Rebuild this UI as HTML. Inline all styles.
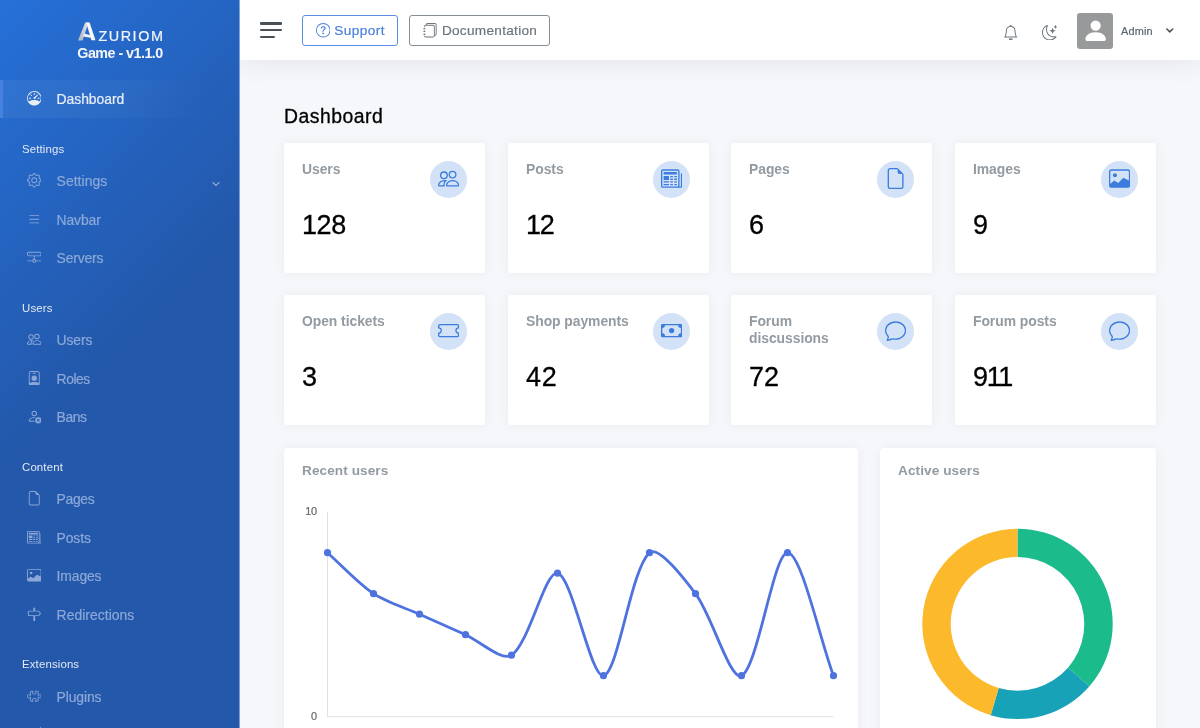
<!DOCTYPE html>
<html lang="en">
<head>
<meta charset="utf-8">
<title>Dashboard | Azuriom Admin</title>
<style>
*{box-sizing:border-box;margin:0;padding:0}
html,body{width:1200px;height:728px;overflow:hidden}
body{font-family:"Liberation Sans",sans-serif;background:#f5f7fb;color:#495057;font-size:13px;position:relative}
ul{list-style:none}
svg{display:block}

/* ---------- sidebar ---------- */
#sidebar{position:absolute;left:0;top:0;width:240px;height:728px;overflow:hidden;
  background:linear-gradient(135deg,#2670d8 0,#2358aa 335px);color:#e9ecef;box-shadow:inset -1px 0 0 rgba(255,255,255,.42)}
.brand{height:79.6px;position:relative}
.brand .logo{position:absolute;left:77px;top:21px}
.brand .name{position:absolute;left:98.4px;top:27.6px;font-size:14.4px;line-height:16px;letter-spacing:1.55px;color:#f2f5fa;font-weight:400;white-space:nowrap}
.brand .ver{position:absolute;left:0;width:240px;text-align:center;top:44.9px;font-size:14.3px;line-height:16px;font-weight:700;color:#f4f6fa;letter-spacing:-.52px;white-space:nowrap}
.side-nav li.hd{height:43.7px;padding:22.6px 22px 0;font-size:11.4px;line-height:16px;color:#e4e9f2;letter-spacing:.15px;white-space:nowrap}
.side-nav li.it{height:38.45px;display:flex;align-items:center;padding-left:26.8px;position:relative;color:#8ca8d8;font-size:13.9px;letter-spacing:-.12px;white-space:nowrap}
.side-nav li.it svg{width:14.5px;height:14.5px;fill:currentColor;margin-right:15.3px;flex:none;position:relative;top:-.7px}
.side-nav li.it span{position:relative;top:-.15px}
.side-nav li.it.active{color:#e9eef7;background:linear-gradient(90deg,rgba(255,255,255,.055),rgba(255,255,255,.035) 50%,rgba(255,255,255,0) 90%);border-left:3px solid #4681dc;padding-left:23.8px;letter-spacing:-.04px}
.side-nav li.it .chev{position:absolute;right:20.5px;top:18.2px;width:8px;height:8px;margin:0}

/* ---------- main ---------- */
#main{position:absolute;left:240px;top:0;width:960px;height:728px;overflow:hidden}
#topbar{position:absolute;left:0;top:0;width:960px;height:60px;background:#fff;box-shadow:0 0 29px 0 rgba(33,37,41,.1);z-index:5}

/* topbar */
.hamb{position:absolute;left:20px;top:21.6px;width:22px;height:18px}
.hamb i{position:absolute;left:0;height:2.7px;background:#495057;border-radius:1px;width:21.8px}
.hamb i:nth-child(1){top:0}.hamb i:nth-child(2){top:6.8px}.hamb i:nth-child(3){top:13.6px;width:14.6px}
.btn{position:absolute;top:14.8px;height:30.6px;border:1px solid;border-radius:3px;display:flex;align-items:center;font-size:13.6px;white-space:nowrap;background:#fff}
.btn svg{width:14.5px;height:14.5px;fill:currentColor;flex:none}
.btn.sup{left:62.3px;width:95.6px;color:#4a80dc;border-color:#5b8de2;padding-left:12.6px;letter-spacing:.42px}
.btn.sup svg{margin-right:4.2px}
.btn.doc{left:169.3px;width:140.6px;color:#6c757d;border-color:#858d95;padding-left:12.6px;letter-spacing:.3px}
.btn.doc svg{margin-right:4.8px}
.tico{position:absolute;fill:#6c757d}
.avatar{position:absolute;left:836.6px;top:13.2px;width:36.4px;height:36.4px;border-radius:3px;background:#98999b;overflow:hidden}
.avatar svg{position:absolute;left:4.7px;top:4.4px;width:27.3px;height:27.3px;fill:#fff}
.uname{position:absolute;left:880.6px;top:24.2px;font-size:10.9px;line-height:14px;color:#5d666e;letter-spacing:.2px;white-space:nowrap}

/* content */
h1{position:absolute;left:44.4px;top:105.2px;font-size:19.4px;line-height:23px;font-weight:400;color:#000;letter-spacing:.48px;white-space:nowrap}
.card{position:absolute;background:#fff;border-radius:3.5px;box-shadow:0 0 13px 0 rgba(33,37,41,.05)}
.stat{width:201.1px;height:130.3px}
.stat .t{position:absolute;left:18.2px;top:18.2px;width:120px;font-size:13.9px;line-height:16.5px;font-weight:700;color:#939ba2;letter-spacing:-.05px}
.stat .n{position:absolute;left:18.4px;top:67.2px;font-size:27px;line-height:30px;color:#000;letter-spacing:-1.35px;white-space:nowrap}
.stat .ic{position:absolute;right:18.4px;top:18px;width:36.8px;height:36.8px;border-radius:50%;background:#d3e2f7}
.stat .ic svg{position:absolute;left:7.8px;top:7px;width:21.2px;height:21.2px;fill:#3b7ddd}
.c1{left:44px}.c2{left:267.55px}.c3{left:491.1px}.c4{left:714.6px}
.r1{top:142.9px}.r2{top:295.2px}
.chart-t{position:absolute;left:18.2px;top:15.4px;font-size:13.6px;line-height:16.5px;font-weight:700;color:#939ba2;letter-spacing:.08px;white-space:nowrap}
.tick{position:absolute;left:0;width:32.8px;text-align:right;font-size:10.9px;line-height:13px;color:#666;letter-spacing:-.3px}
/* greyscale text AA: promote text containers to non-opaque layers */
.side-nav,.brand,#topbar>*,h1,.card>*{will-change:transform}
.stat .n,h1{-webkit-text-stroke:.3px #000}
.side-nav li.it span,.btn span,.uname,.tick,.brand .name{-webkit-text-stroke:.2px currentColor}
</style>
</head>
<body>

<nav id="sidebar">
  <div class="brand">
    <svg class="logo" width="20" height="21" viewBox="0 0 20 21">
      <defs><linearGradient id="lg" x1="0" y1="1" x2="1" y2="0"><stop offset="0" stop-color="#aeb4bd"/><stop offset="1" stop-color="#e2e5e9"/></linearGradient></defs>
      <polygon points="1,19.5 8.2,1.6 11.6,1.6 5.5,19.5" fill="url(#lg)"/>
      <polygon points="9.2,1.6 12.6,1.6 18.5,19.3 14.4,19.3" fill="#f7f8fa"/>
      <polygon points="7.2,12.6 14.2,14.6 14.8,17 6.2,15.4" fill="#f1f3f6"/>
    </svg>
    <div class="name">ZURIOM</div>
    <div class="ver">Game - v1.1.0</div>
  </div>
  <ul class="side-nav">
    <li class="it active"><svg viewBox="0 0 16 16"><path d="M8 2a.5.5 0 0 1 .5.5V4a.5.5 0 0 1-1 0V2.500A.5.5 0 0 1 8 2zM3.732 3.732a.5.5 0 0 1 .707 0l.915.914a.5.5 0 1 1-.708.708l-.914-.915a.5.5 0 0 1 0-.707zM2 8a.5.5 0 0 1 .5-.5h1.586a.5.5 0 0 1 0 1H2.500A.5.5 0 0 1 2 8zm9.500 0a.5.5 0 0 1 .5-.5h1.500a.5.5 0 0 1 0 1H12a.5.5 0 0 1-.5-.5zm.754-4.246a.389.389 0 0 0-.527-.020L7.547 7.310A.910.910 0 1 0 8.850 8.569l3.434-4.297a.389.389 0 0 0-.029-.518z"/><path fill-rule="evenodd" d="M6.664 15.889A8 8 0 1 1 9.336.110a8 8 0 0 1-2.672 15.780zm-4.665-4.283A11.945 11.945 0 0 1 8 10c2.186 0 4.236.585 6.001 1.606a7 7 0 1 0-12.002 0z"/></svg><span>Dashboard</span></li>
    <li class="hd">Settings</li>
    <li class="it"><svg viewBox="0 0 16 16"><path d="M8 4.754a3.246 3.246 0 1 0 0 6.492 3.246 3.246 0 0 0 0-6.492zM5.754 8a2.246 2.246 0 1 1 4.492 0 2.246 2.246 0 0 1-4.492 0z"/><path d="M9.796 1.343c-.527-1.790-3.065-1.790-3.592 0l-.094.319a.873.873 0 0 1-1.255.520l-.292-.160c-1.640-.892-3.433.902-2.540 2.541l.159.292a.873.873 0 0 1-.520 1.255l-.319.094c-1.790.527-1.790 3.065 0 3.592l.319.094a.873.873 0 0 1 .520 1.255l-.160.292c-.892 1.640.901 3.434 2.541 2.540l.292-.159a.873.873 0 0 1 1.255.520l.094.319c.527 1.790 3.065 1.790 3.592 0l.094-.319a.873.873 0 0 1 1.255-.520l.292.160c1.640.893 3.434-.902 2.540-2.541l-.159-.292a.873.873 0 0 1 .520-1.255l.319-.094c1.790-.527 1.790-3.065 0-3.592l-.319-.094a.873.873 0 0 1-.520-1.255l.160-.292c.893-1.640-.902-3.433-2.541-2.540l-.292.159a.873.873 0 0 1-1.255-.520l-.094-.319zm-2.633.283c.246-.835 1.428-.835 1.674 0l.094.319a1.873 1.873 0 0 0 2.693 1.115l.291-.160c.764-.415 1.600.420 1.184 1.185l-.159.292a1.873 1.873 0 0 0 1.116 2.692l.318.094c.835.246.835 1.428 0 1.674l-.319.094a1.873 1.873 0 0 0-1.115 2.693l.160.291c.415.764-.420 1.600-1.185 1.184l-.291-.159a1.873 1.873 0 0 0-2.693 1.116l-.094.318c-.246.835-1.428.835-1.674 0l-.094-.319a1.873 1.873 0 0 0-2.692-1.115l-.292.160c-.764.415-1.600-.420-1.184-1.185l.159-.291A1.873 1.873 0 0 0 1.945 8.930l-.319-.094c-.835-.246-.835-1.428 0-1.674l.319-.094A1.873 1.873 0 0 0 3.060 4.377l-.160-.292c-.415-.764.420-1.600 1.185-1.184l.292.159a1.873 1.873 0 0 0 2.692-1.115l.094-.319z"/></svg><span style="letter-spacing:.06px">Settings</span><svg class="chev" viewBox="0 0 16 16"><path d="M2 5l6 6 6-6" fill="none" stroke="currentColor" stroke-width="2.2" stroke-linecap="round" stroke-linejoin="round"/></svg></li>
    <li class="it"><svg viewBox="0 0 16 16"><path fill-rule="evenodd" d="M2.500 12a.5.5 0 0 1 .5-.5h10a.5.5 0 0 1 0 1H3a.5.5 0 0 1-.5-.5zm0-4a.5.5 0 0 1 .5-.5h10a.5.5 0 0 1 0 1H3a.5.5 0 0 1-.5-.5zm0-4a.5.5 0 0 1 .5-.5h10a.5.5 0 0 1 0 1H3a.5.5 0 0 1-.5-.5z"/></svg><span>Navbar</span></li>
    <li class="it"><svg viewBox="0 0 16 16"><path d="M4.500 5a.5.5 0 1 0 0-1 .5.5 0 0 0 0 1zM3 4.500a.5.5 0 1 1-1 0 .5.5 0 0 1 1 0z"/><path d="M0 4a2 2 0 0 1 2-2h12a2 2 0 0 1 2 2v1a2 2 0 0 1-2 2H8.500v3a1.500 1.500 0 0 1 1.500 1.500h5.500a.5.5 0 0 1 0 1H10A1.500 1.500 0 0 1 8.500 14h-1A1.500 1.500 0 0 1 6 12.500H.500a.5.5 0 0 1 0-1H6A1.500 1.500 0 0 1 7.500 10V7H2a2 2 0 0 1-2-2V4zm1 0v1a1 1 0 0 0 1 1h12a1 1 0 0 0 1-1V4a1 1 0 0 0-1-1H2a1 1 0 0 0-1 1zm6 7.500v1a.5.5 0 0 0 .5.5h1a.5.5 0 0 0 .5-.5v-1a.5.5 0 0 0-.5-.5h-1a.5.5 0 0 0-.5.5z"/></svg><span style="letter-spacing:-.17px">Servers</span></li>
    <li class="hd">Users</li>
    <li class="it"><svg viewBox="0 0 16 16"><path d="M15 14s1 0 1-1-1-4-5-4-5 3-5 4 1 1 1 1h8zm-7.978-1A.261.261 0 0 1 7 12.996c.001-.264.167-1.030.760-1.720C8.312 10.629 9.282 10 11 10c1.717 0 2.687.630 3.240 1.276.593.690.758 1.457.760 1.720l-.008.002a.274.274 0 0 1-.014.002H7.022zM11 7a2 2 0 1 0 0-4 2 2 0 0 0 0 4zm3-2a3 3 0 1 1-6 0 3 3 0 0 1 6 0zM6.936 9.280a5.880 5.880 0 0 0-1.230-.247A7.350 7.350 0 0 0 5 9c-4 0-5 3-5 4 0 .667.333 1 1 1h4.216A2.238 2.238 0 0 1 5 13c0-1.010.377-2.042 1.090-2.904.243-.294.526-.569.846-.816zM4.920 10A5.493 5.493 0 0 0 4 13H1c0-.260.164-1.030.760-1.724.545-.636 1.492-1.256 3.160-1.275zM1.500 5.500a3 3 0 1 1 6 0 3 3 0 0 1-6 0zm3-2a2 2 0 1 0 0 4 2 2 0 0 0 0-4z"/></svg><span>Users</span></li>
    <li class="it"><svg viewBox="0 0 16 16"><path d="M6.500 2a.5.5 0 0 0 0 1h3a.5.5 0 0 0 0-1h-3zM11 8a3 3 0 1 1-6 0 3 3 0 0 1 6 0z"/><path d="M4.500 0A2.500 2.500 0 0 0 2 2.500V14a2 2 0 0 0 2 2h8a2 2 0 0 0 2-2V2.500A2.500 2.500 0 0 0 11.500 0h-7zM3 2.500A1.500 1.500 0 0 1 4.500 1h7A1.500 1.500 0 0 1 13 2.500v10.795a4.200 4.200 0 0 0-.776-.492C11.392 12.387 10.063 12 8 12s-3.392.387-4.224.803a4.200 4.200 0 0 0-.776.492V2.500z"/></svg><span style="letter-spacing:-.47px">Roles</span></li>
    <li class="it"><svg viewBox="0 0 16 16"><path d="M11 5a3 3 0 1 1-6 0 3 3 0 0 1 6 0zM8 7a2 2 0 1 0 0-4 2 2 0 0 0 0 4zm.256 7a4.474 4.474 0 0 1-.229-1.004H3c.001-.246.154-.986.832-1.664C4.484 10.680 5.711 10 8 10c.260 0 .507.009.740.025.226-.341.496-.650.804-.918C9.077 9.038 8.564 9 8 9c-5 0-6 3-6 4s1 1 1 1h5.256z"/><path d="M12.500 16a3.500 3.500 0 1 0 0-7 3.500 3.500 0 0 0 0 7zm-.646-4.854.646.647.646-.647a.5.5 0 0 1 .708.708l-.647.646.647.646a.5.5 0 0 1-.708.708l-.646-.647-.646.647a.5.5 0 0 1-.708-.708l.647-.646-.647-.646a.5.5 0 0 1 .708-.708z"/></svg><span style="letter-spacing:-.43px">Bans</span></li>
    <li class="hd">Content</li>
    <li class="it"><svg viewBox="0 0 16 16"><path d="M14 4.500V14a2 2 0 0 1-2 2H4a2 2 0 0 1-2-2V2a2 2 0 0 1 2-2h5.500L14 4.500zm-3 0A1.500 1.500 0 0 1 9.500 3V1H4a1 1 0 0 0-1 1v12a1 1 0 0 0 1 1h8a1 1 0 0 0 1-1V4.500h-2z"/></svg><span style="letter-spacing:-.32px">Pages</span></li>
    <li class="it"><svg viewBox="0 0 16 16"><path d="M0 2.500A1.500 1.500 0 0 1 1.500 1h11A1.500 1.500 0 0 1 14 2.500v10.528c0 .3-.05.654-.238.972h.738a.5.5 0 0 0 .5-.5v-9a.5.5 0 0 1 1 0v9a1.500 1.500 0 0 1-1.500 1.500H1.497A1.497 1.497 0 0 1 0 13.500v-11zM12 14c.37 0 .654-.211.853-.441.092-.106.147-.279.147-.531V2.500a.5.5 0 0 0-.5-.5h-11a.5.5 0 0 0-.5.5v11c0 .278.223.5.497.5H12z"/><path d="M2 3h10v2H2V3zm0 3h4v3H2V6zm0 4h4v1H2v-1zm0 2h4v1H2v-1zm5-6h2v1H7V6zm3 0h2v1h-2V6zM7 8h2v1H7V8zm3 0h2v1h-2V8zm-3 2h2v1H7v-1zm3 0h2v1h-2v-1zm-3 2h2v1H7v-1zm3 0h2v1h-2v-1z"/></svg><span>Posts</span></li>
    <li class="it"><svg viewBox="0 0 16 16"><path d="M6.002 5.500a1.500 1.500 0 1 1-3 0 1.500 1.500 0 0 1 3 0z"/><path d="M2.002 1a2 2 0 0 0-2 2v10a2 2 0 0 0 2 2h12a2 2 0 0 0 2-2V3a2 2 0 0 0-2-2h-12zm12 1a1 1 0 0 1 1 1v6.500l-3.777-1.947a.5.5 0 0 0-.577.093l-3.710 3.710-2.660-1.772a.5.5 0 0 0-.630.062L1.002 12V3a1 1 0 0 1 1-1h12z"/></svg><span>Images</span></li>
    <li class="it"><svg viewBox="0 0 16 16"><path d="M7 1.414V4H2a1 1 0 0 0-1 1v4a1 1 0 0 0 1 1h5v6h2v-6h3.532a1 1 0 0 0 .768-.360l1.933-2.320a.5.5 0 0 0 0-.640L13.300 4.360a1 1 0 0 0-.768-.360H9V1.414a1 1 0 0 0-2 0zM12.532 5l1.666 2-1.666 2H2V5h10.532z"/></svg><span style="letter-spacing:.04px">Redirections</span></li>
    <li class="hd">Extensions</li>
    <li class="it"><svg viewBox="0 0 16 16"><path fill="none" stroke="currentColor" stroke-width="1" stroke-linejoin="round" d="M3.600 3.200a.8.8 0 0 1 .8-.7H6.800c.2.900-.9 1.200-.9 2 0 .800 1 1.100 2.100 1.100s2.100-.300 2.100-1.100c0-.800-1.100-1.100-.9-2h2.400a.8.800 0 0 1 .8.700L12.100 7h.8c.9 0 .9-1 1.600-1 .700 0 1 .9 1 2s-.3 2-1 2c-.7 0-.7-1-1.600-1h-.8l.3 3.800a.8.800 0 0 1-.8.700H9.200c-.2-.900.900-1.200.9-2 0-.800-1-1.100-2.100-1.100s-2.100.300-2.100 1.100c0 .800 1.100 1.100.9 2H4.400a.8.800 0 0 1-.8-.7L3.900 9h-.8c-.9 0-.9 1-1.600 1-.7 0-1-.9-1-2s.3-2 1-2c.7 0 .7 1 1.600 1h.8z"/></svg><span>Plugins</span></li>
    <li class="it"><svg viewBox="0 0 16 16"><path d="M15.825.120a.5.5 0 0 1 .132.584c-1.530 3.430-4.743 8.170-7.095 10.640a6.100 6.100 0 0 1-2.373 1.534c-.018.227-.06.538-.160.868-.201.659-.667 1.479-1.708 1.740a8.100 8.100 0 0 1-3.078.132 4 4 0 0 1-.562-.135 1.400 1.400 0 0 1-.466-.247.700.7 0 0 1-.204-.288.620.620 0 0 1 .004-.443c.095-.245.316-.380.461-.452.394-.197.625-.453.867-.826.095-.144.184-.297.287-.472l.117-.198c.151-.255.326-.540.546-.848.528-.739 1.201-.925 1.746-.896q.190.012.348.048c.062-.172.142-.380.238-.608.261-.619.658-1.419 1.187-2.069 2.176-2.670 6.180-6.206 9.117-8.104a.5.5 0 0 1 .596.040z"/></svg><span>Themes</span></li>
  </ul>
</nav>

<div id="main">
  <div id="topbar">
    <div class="hamb"><i></i><i></i><i></i></div>
    <div class="btn sup"><svg viewBox="0 0 16 16"><path d="M8 15A7 7 0 1 1 8 1a7 7 0 0 1 0 14zm0 1A8 8 0 1 0 8 0a8 8 0 0 0 0 16z"/><path d="M5.255 5.786a.237.237 0 0 0 .241.247h.825c.138 0 .248-.113.266-.250.090-.656.540-1.134 1.342-1.134.686 0 1.314.343 1.314 1.168 0 .635-.374.927-.965 1.371-.673.489-1.206 1.060-1.168 1.987l.003.217a.250.250 0 0 0 .250.246h.811a.250.250 0 0 0 .250-.250v-.105c0-.718.273-.927 1.010-1.486.609-.463 1.244-.977 1.244-2.056 0-1.511-1.276-2.241-2.673-2.241-1.267 0-2.655.590-2.750 2.286zm1.557 5.763c0 .533.425.927 1.010.927.609 0 1.028-.394 1.028-.927 0-.552-.420-.940-1.029-.940-.584 0-1.009.388-1.009.940z"/></svg><span>Support</span></div>
    <div class="btn doc"><svg viewBox="0 0 16 16"><path d="M5 0h8a2 2 0 0 1 2 2v10a2 2 0 0 1-2 2 2 2 0 0 1-2 2H3a2 2 0 0 1-2-2h1a1 1 0 0 0 1 1h8a1 1 0 0 0 1-1V4a1 1 0 0 0-1-1H3a1 1 0 0 0-1 1H1a2 2 0 0 1 2-2h8a2 2 0 0 1 2 2v9a1 1 0 0 0 1-1V2a1 1 0 0 0-1-1H5a1 1 0 0 0-1 1H3a2 2 0 0 1 2-2z"/><path d="M1 6v-.5a.5.5 0 0 1 1 0V6h.5a.5.5 0 0 1 0 1h-2a.5.5 0 0 1 0-1H1zm0 3v-.5a.5.5 0 0 1 1 0V9h.5a.5.5 0 0 1 0 1h-2a.5.5 0 0 1 0-1H1zm0 2.500v.5H.500a.5.5 0 0 0 0 1h2a.5.5 0 0 0 0-1H2v-.5a.5.5 0 0 0-1 0z"/></svg><span>Documentation</span></div>
    <svg class="tico" style="left:763.4px;top:24.6px;width:15.4px;height:15.4px" viewBox="0 0 16 16"><path d="M8 16a2 2 0 0 0 2-2H6a2 2 0 0 0 2 2zM8 1.918l-.797.161A4.002 4.002 0 0 0 4 6c0 .628-.134 2.197-.459 3.742-.160.767-.376 1.566-.663 2.258h10.244c-.287-.692-.502-1.490-.663-2.258C12.134 8.197 12 6.628 12 6a4.002 4.002 0 0 0-3.203-3.920L8 1.917zM14.220 12c.223.447.481.801.780 1H1c.299-.199.557-.553.780-1C2.680 10.200 3 6.880 3 6c0-2.420 1.720-4.440 4.005-4.901a1 1 0 1 1 1.990 0A5.002 5.002 0 0 1 13 6c0 .880.320 4.200 1.220 6z"/></svg>
    <svg class="tico" style="left:802px;top:24.7px;width:15.4px;height:15.4px" viewBox="0 0 16 16"><path d="M6 .278a.768.768 0 0 1 .080.858 7.208 7.208 0 0 0-.878 3.460c0 4.021 3.278 7.277 7.318 7.277.527 0 1.040-.055 1.533-.160a.787.787 0 0 1 .810.316.733.733 0 0 1-.031.893A8.349 8.349 0 0 1 8.344 16C3.734 16 0 12.286 0 7.710 0 4.266 2.114 1.312 5.124.060A.752.752 0 0 1 6 .278zM4.858 1.311A7.269 7.269 0 0 0 1.025 7.710c0 4.020 3.279 7.276 7.319 7.276a7.316 7.316 0 0 0 5.205-2.162c-.337.042-.680.063-1.029.063-4.610 0-8.343-3.714-8.343-8.290 0-1.167.242-2.278.681-3.286z"/><path d="M10.794 3.148a.217.217 0 0 1 .412 0l.387 1.162c.173.518.579.924 1.097 1.097l1.162.387a.217.217 0 0 1 0 .412l-1.162.387a1.734 1.734 0 0 0-1.097 1.097l-.387 1.162a.217.217 0 0 1-.412 0l-.387-1.162A1.734 1.734 0 0 0 9.310 6.593l-1.162-.387a.217.217 0 0 1 0-.412l1.162-.387a1.734 1.734 0 0 0 1.097-1.097l.387-1.162zM13.863.099a.145.145 0 0 1 .274 0l.258.774c.115.346.386.617.732.732l.774.258a.145.145 0 0 1 0 .274l-.774.258a1.156 1.156 0 0 0-.732.732l-.258.774a.145.145 0 0 1-.274 0l-.258-.774a1.156 1.156 0 0 0-.732-.732l-.774-.258a.145.145 0 0 1 0-.274l.774-.258c.346-.115.617-.386.732-.732L13.863.100z"/></svg>
    <div class="avatar"><svg viewBox="0 0 16 16"><path d="M3 14s-1 0-1-1 1-4 6-4 6 3 6 4-1 1-1 1H3zm5-6a3 3 0 1 0 0-6 3 3 0 0 0 0 6z"/></svg></div>
    <div class="uname">Admin</div>
    <svg class="tico" style="left:925.6px;top:27.6px;width:7.6px;height:5.4px" viewBox="0 0 14 10"><path d="M1.600 1.800 7 7.200l5.400-5.400" fill="none" stroke="#495057" style="stroke:#495057" stroke-width="2.8" stroke-linecap="round" stroke-linejoin="round"/></svg>
</div>
    <h1>Dashboard</h1>
  <div class="card stat r1 c1"><div class="t">Users</div><div class="n" style="letter-spacing:-.4px">128</div><div class="ic"><svg viewBox="0 0 16 16"><path d="M15 14s1 0 1-1-1-4-5-4-5 3-5 4 1 1 1 1h8zm-7.978-1A.261.261 0 0 1 7 12.996c.001-.264.167-1.030.760-1.720C8.312 10.629 9.282 10 11 10c1.717 0 2.687.630 3.240 1.276.593.690.758 1.457.760 1.720l-.008.002a.274.274 0 0 1-.014.002H7.022zM11 7a2 2 0 1 0 0-4 2 2 0 0 0 0 4zm3-2a3 3 0 1 1-6 0 3 3 0 0 1 6 0zM6.936 9.280a5.880 5.880 0 0 0-1.230-.247A7.350 7.350 0 0 0 5 9c-4 0-5 3-5 4 0 .667.333 1 1 1h4.216A2.238 2.238 0 0 1 5 13c0-1.010.377-2.042 1.090-2.904.243-.294.526-.569.846-.816zM4.920 10A5.493 5.493 0 0 0 4 13H1c0-.260.164-1.030.760-1.724.545-.636 1.492-1.256 3.160-1.275zM1.500 5.500a3 3 0 1 1 6 0 3 3 0 0 1-6 0zm3-2a2 2 0 1 0 0 4 2 2 0 0 0 0-4z"/></svg></div></div>
  <div class="card stat r1 c2"><div class="t">Posts</div><div class="n">12</div><div class="ic"><svg viewBox="0 0 16 16"><path d="M0 2.500A1.500 1.500 0 0 1 1.500 1h11A1.500 1.500 0 0 1 14 2.500v10.528c0 .3-.05.654-.238.972h.738a.5.5 0 0 0 .5-.5v-9a.5.5 0 0 1 1 0v9a1.500 1.500 0 0 1-1.500 1.500H1.497A1.497 1.497 0 0 1 0 13.500v-11zM12 14c.37 0 .654-.211.853-.441.092-.106.147-.279.147-.531V2.500a.5.5 0 0 0-.5-.5h-11a.5.5 0 0 0-.5.5v11c0 .278.223.5.497.5H12z"/><path d="M2 3h10v2H2V3zm0 3h4v3H2V6zm0 4h4v1H2v-1zm0 2h4v1H2v-1zm5-6h2v1H7V6zm3 0h2v1h-2V6zM7 8h2v1H7V8zm3 0h2v1h-2V8zm-3 2h2v1H7v-1zm3 0h2v1h-2v-1zm-3 2h2v1H7v-1zm3 0h2v1h-2v-1z"/></svg></div></div>
  <div class="card stat r1 c3"><div class="t">Pages</div><div class="n">6</div><div class="ic"><svg viewBox="0 0 16 16"><path d="M14 4.500V14a2 2 0 0 1-2 2H4a2 2 0 0 1-2-2V2a2 2 0 0 1 2-2h5.500L14 4.500zm-3 0A1.500 1.500 0 0 1 9.500 3V1H4a1 1 0 0 0-1 1v12a1 1 0 0 0 1 1h8a1 1 0 0 0 1-1V4.500h-2z"/></svg></div></div>
  <div class="card stat r1 c4"><div class="t">Images</div><div class="n">9</div><div class="ic"><svg viewBox="0 0 16 16"><path d="M6.002 5.500a1.500 1.500 0 1 1-3 0 1.500 1.500 0 0 1 3 0z"/><path d="M2.002 1a2 2 0 0 0-2 2v10a2 2 0 0 0 2 2h12a2 2 0 0 0 2-2V3a2 2 0 0 0-2-2h-12zm12 1a1 1 0 0 1 1 1v6.500l-3.777-1.947a.5.5 0 0 0-.577.093l-3.710 3.710-2.660-1.772a.5.5 0 0 0-.630.062L1.002 12V3a1 1 0 0 1 1-1h12z"/></svg></div></div>
  <div class="card stat r2 c1"><div class="t">Open tickets</div><div class="n">3</div><div class="ic"><svg viewBox="0 0 16 16"><path d="M0 4.500A1.500 1.500 0 0 1 1.500 3h13A1.500 1.500 0 0 1 16 4.500V6a.5.5 0 0 1-.5.5 1.500 1.500 0 0 0 0 3 .5.5 0 0 1 .5.5v1.500a1.500 1.500 0 0 1-1.500 1.500h-13A1.500 1.500 0 0 1 0 11.500V10a.5.5 0 0 1 .5-.5 1.500 1.500 0 1 0 0-3A.5.5 0 0 1 0 6V4.500zM1.500 4a.5.5 0 0 0-.5.5v1.050a2.500 2.500 0 0 1 0 4.900v1.050a.5.5 0 0 0 .5.5h13a.5.5 0 0 0 .5-.5v-1.050a2.500 2.500 0 0 1 0-4.900V4.500a.5.5 0 0 0-.5-.5h-13z"/></svg></div></div>
  <div class="card stat r2 c2"><div class="t">Shop payments</div><div class="n" style="letter-spacing:.8px">42</div><div class="ic"><svg viewBox="0 0 16 16"><path d="M8 10a2 2 0 1 0 0-4 2 2 0 0 0 0 4z"/><path d="M0 4a1 1 0 0 1 1-1h14a1 1 0 0 1 1 1v8a1 1 0 0 1-1 1H1a1 1 0 0 1-1-1V4zm3 0a2 2 0 0 1-2 2v4a2 2 0 0 1 2 2h10a2 2 0 0 1 2-2V6a2 2 0 0 1-2-2H3z"/></svg></div></div>
  <div class="card stat r2 c3"><div class="t">Forum<br>discussions</div><div class="n" style="letter-spacing:0">72</div><div class="ic"><svg viewBox="0 0 16 16"><path d="M2.678 11.894a1 1 0 0 1 .287.801 10.970 10.970 0 0 1-.398 2c1.395-.323 2.247-.697 2.634-.893a1 1 0 0 1 .710-.074A8.060 8.060 0 0 0 8 14c3.996 0 7-2.807 7-6 0-3.192-3.004-6-7-6S1 4.808 1 8c0 1.468.617 2.830 1.678 3.894zm-.493 3.905a21.682 21.682 0 0 1-.713.129c-.200.032-.352-.176-.273-.362a9.680 9.680 0 0 0 .244-.637l.003-.010c.248-.720.450-1.548.524-2.319C.743 11.370 0 9.760 0 8c0-3.866 3.582-7 8-7s8 3.134 8 7-3.582 7-8 7a9.060 9.060 0 0 1-2.347-.306c-.520.263-1.639.742-3.468 1.105z"/></svg></div></div>
  <div class="card stat r2 c4"><div class="t">Forum posts</div><div class="n">911</div><div class="ic"><svg viewBox="0 0 16 16"><path d="M2.678 11.894a1 1 0 0 1 .287.801 10.970 10.970 0 0 1-.398 2c1.395-.323 2.247-.697 2.634-.893a1 1 0 0 1 .710-.074A8.060 8.060 0 0 0 8 14c3.996 0 7-2.807 7-6 0-3.192-3.004-6-7-6S1 4.808 1 8c0 1.468.617 2.830 1.678 3.894zm-.493 3.905a21.682 21.682 0 0 1-.713.129c-.200.032-.352-.176-.273-.362a9.680 9.680 0 0 0 .244-.637l.003-.010c.248-.720.450-1.548.524-2.319C.743 11.370 0 9.760 0 8c0-3.866 3.582-7 8-7s8 3.134 8 7-3.582 7-8 7a9.060 9.060 0 0 1-2.347-.306c-.520.263-1.639.742-3.468 1.105z"/></svg></div></div>
  <div class="card" style="left:44px;top:447.8px;width:573.6px;height:300px">
    <div class="chart-t">Recent users</div>
    <svg width="574" height="281" viewBox="0 0 574 281" style="position:absolute;left:0;top:0;overflow:visible">
      <path d="M43.5 63.7V269.2M43 268.7H549.5" fill="none" stroke="#dfe0e2" stroke-width="1"/>
      <path d="M43.50 104.70 C57.30 117.00 74.31 135.55 89.50 145.70 C101.91 154.00 121.70 160.05 135.50 166.20 C149.30 172.35 167.70 180.55 181.50 186.70 C195.30 192.85 217.87 213.64 227.50 207.20 C245.47 195.19 260.93 122.40 273.50 125.20 C288.53 128.55 306.77 230.54 319.50 227.70 C334.37 224.39 346.71 121.44 365.50 104.70 C374.31 96.84 400.57 131.09 411.50 145.70 C428.17 167.99 445.98 232.83 457.50 227.70 C473.58 220.53 489.70 104.70 503.50 104.70 C517.30 104.70 535.70 190.80 549.50 227.70" fill="none" stroke="#4e73df" stroke-width="2.8" stroke-linecap="round" stroke-linejoin="round"/>
      <g fill="#4e73df"><circle cx="43.50" cy="104.70" r="3.6"/><circle cx="89.50" cy="145.70" r="3.6"/><circle cx="135.50" cy="166.20" r="3.6"/><circle cx="181.50" cy="186.70" r="3.6"/><circle cx="227.50" cy="207.20" r="3.6"/><circle cx="273.50" cy="125.20" r="3.6"/><circle cx="319.50" cy="227.70" r="3.6"/><circle cx="365.50" cy="104.70" r="3.6"/><circle cx="411.50" cy="145.70" r="3.6"/><circle cx="457.50" cy="227.70" r="3.6"/><circle cx="503.50" cy="104.70" r="3.6"/><circle cx="549.50" cy="227.70" r="3.6"/></g>
    </svg>
    <div class="tick" style="top:57.6px">10</div>
    <div class="tick" style="top:262.1px">0</div>
  </div>
  <div class="card" style="left:640px;top:447.8px;width:275.7px;height:300px">
    <div class="chart-t">Active users</div>
    <svg width="276" height="281" viewBox="0 0 276 281" style="position:absolute;left:0;top:0;overflow:visible">
      <path fill="#1cbb8c" d="M137.50 80.70 A95.2 95.2 0 0 1 209.45 238.24 L187.98 219.64 A66.8 66.8 0 0 0 137.50 109.10 Z"/>
      <path fill="#17a2b8" d="M209.45 238.24 A95.2 95.2 0 0 1 110.68 267.24 L118.68 239.99 A66.8 66.8 0 0 0 187.98 219.64 Z"/>
      <path fill="#fcb92c" d="M110.68 267.24 A95.2 95.2 0 0 1 137.50 80.70 L137.50 109.10 A66.8 66.8 0 0 0 118.68 239.99 Z"/>
    </svg>
  </div>
</div>

</body>
</html>
